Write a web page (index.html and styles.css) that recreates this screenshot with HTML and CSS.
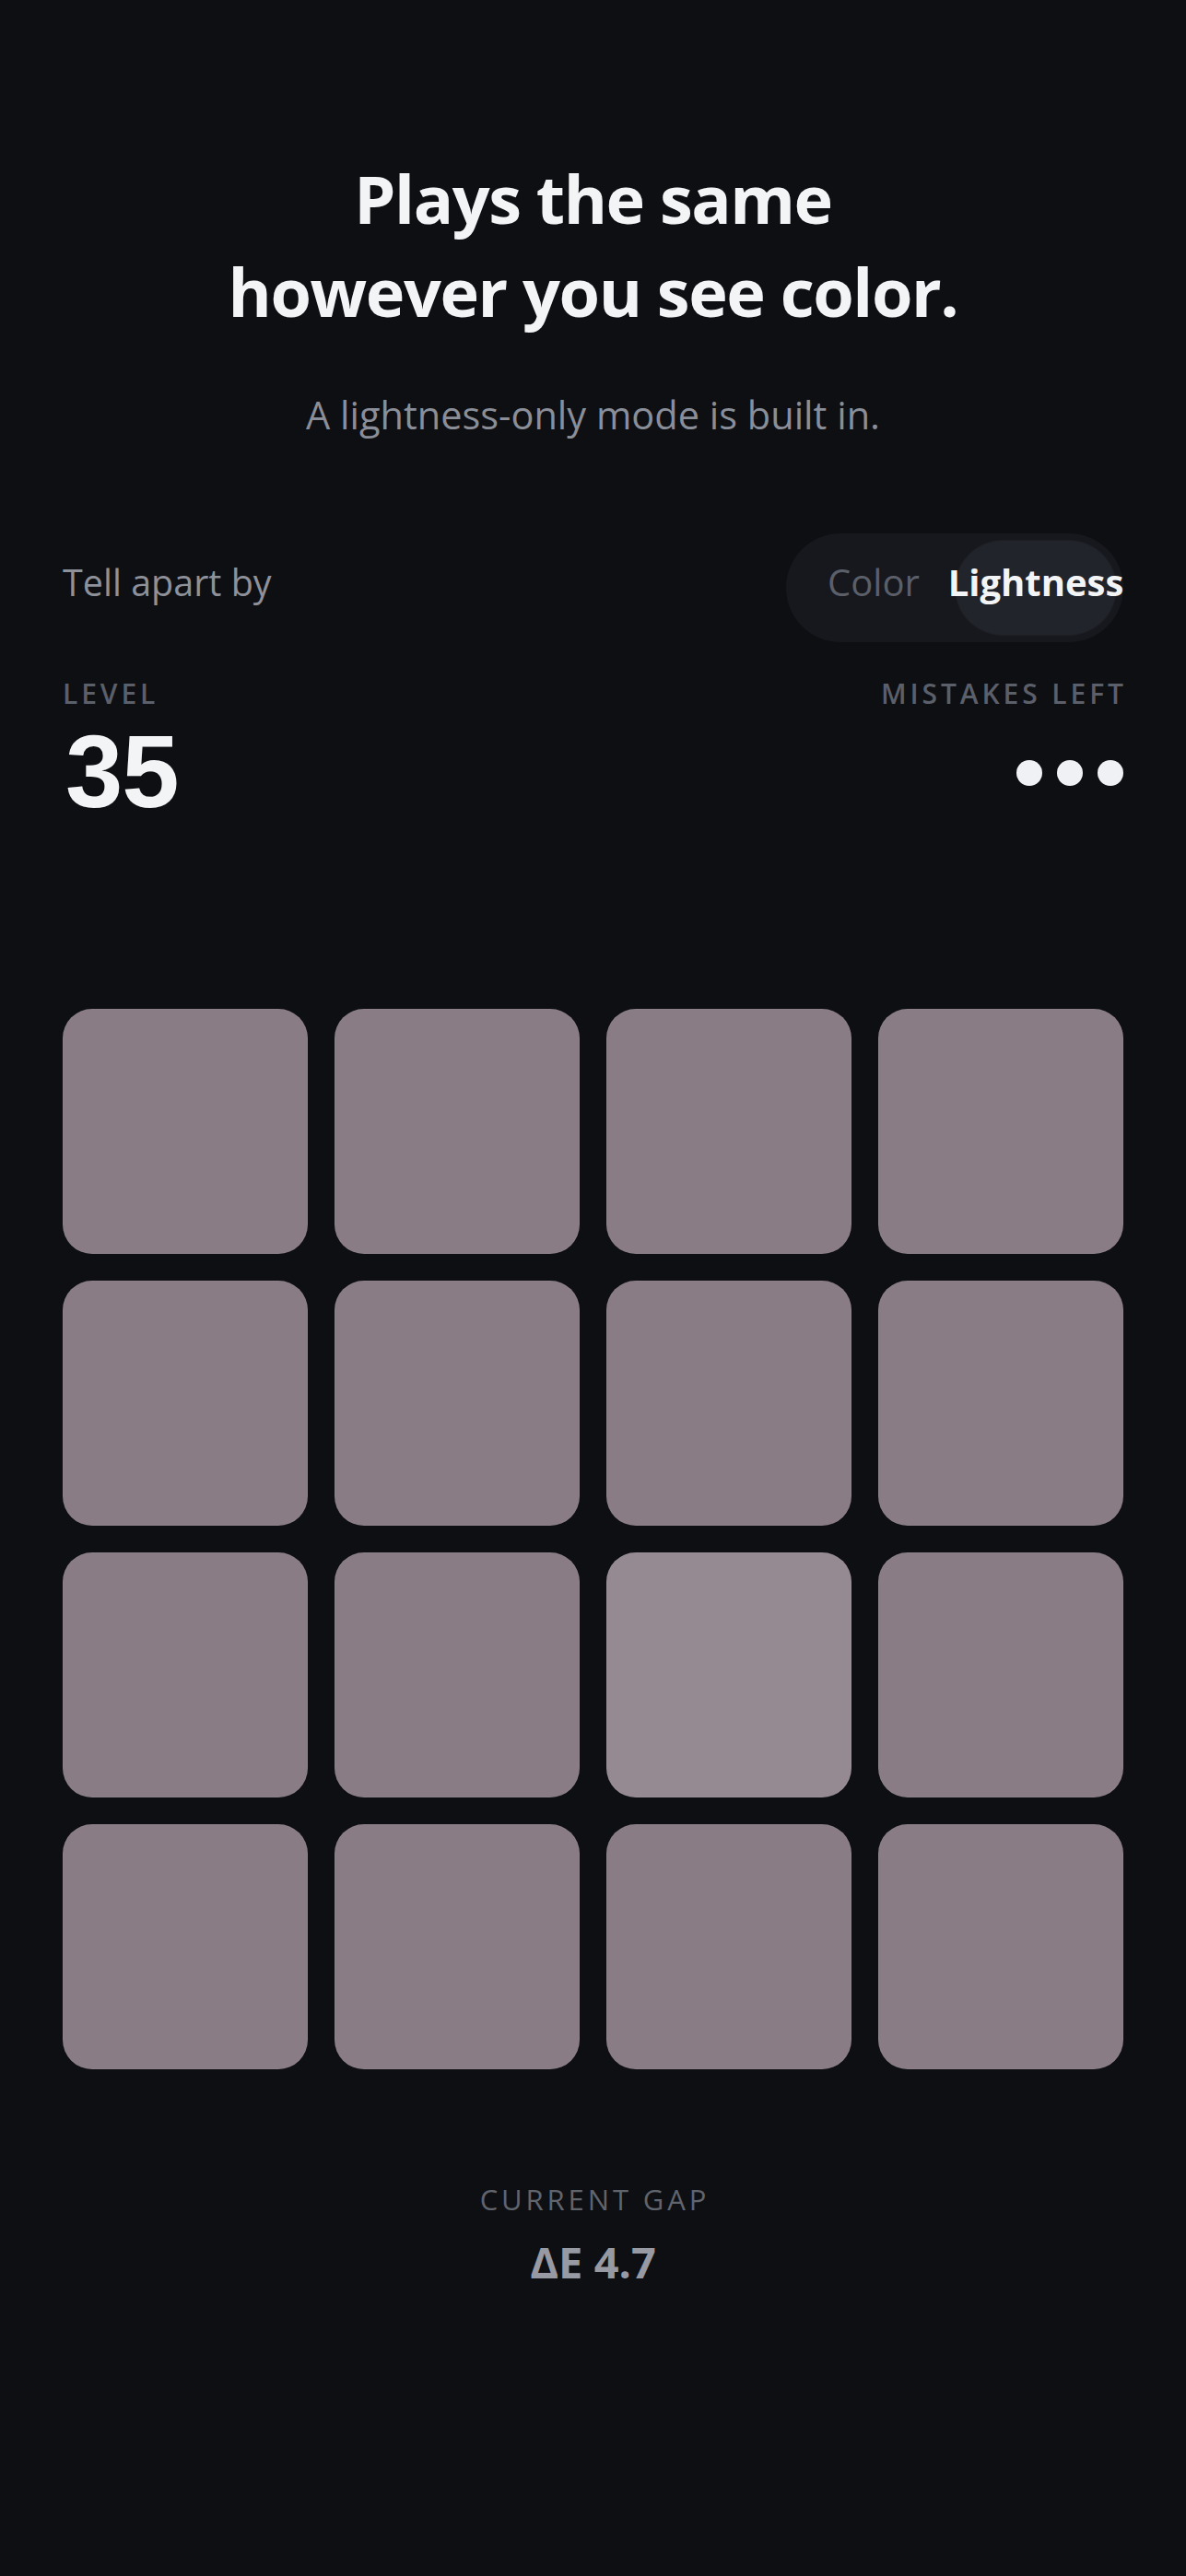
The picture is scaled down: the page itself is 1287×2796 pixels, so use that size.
FILE: index.html
```html
<!DOCTYPE html>
<html lang="en">
<head>
<meta charset="utf-8">
<title>Plays the same however you see color.</title>
<link rel="stylesheet" href="styles.css">
</head>
<body>
<main class="page">
  <header class="hero">
    <h1 class="hero-title">Plays the same<br>however you see color.</h1>
    <p class="hero-sub">A lightness-only mode is built in.</p>
  </header>

  <section class="mode-row">
    <span class="mode-label">Tell apart by</span>
    <div class="toggle" role="tablist">
      <button class="toggle-btn" type="button">Color</button>
      <button class="toggle-btn is-active" type="button">Lightness</button>
    </div>
  </section>

  <section class="stats">
    <div class="stat">
      <span class="stat-label">LEVEL</span>
      <span class="stat-value">35</span>
    </div>
    <div class="stat stat-right">
      <span class="stat-label stat-label-right">MISTAKES LEFT</span>
      <div class="lives">
        <span class="life"></span>
        <span class="life"></span>
        <span class="life"></span>
      </div>
    </div>
  </section>

  <section class="board">
    <div class="tile"></div>
    <div class="tile"></div>
    <div class="tile"></div>
    <div class="tile"></div>
    <div class="tile"></div>
    <div class="tile"></div>
    <div class="tile"></div>
    <div class="tile"></div>
    <div class="tile"></div>
    <div class="tile"></div>
    <div class="tile tile-odd"></div>
    <div class="tile"></div>
    <div class="tile"></div>
    <div class="tile"></div>
    <div class="tile"></div>
    <div class="tile"></div>
  </section>

  <footer class="gap">
    <span class="gap-label">CURRENT GAP</span>
    <span class="gap-value">ΔE 4.7</span>
  </footer>
</main>
</body>
</html>
```

FILE: styles.css
```css
html, body {
  margin: 0;
  padding: 0;
  background: #0e0f13;
}

body {
  min-height: 2796px;
  font-family: "Open Sans", "Noto Sans", "Liberation Sans", sans-serif;
  color: #f3f4f6;
}

.page {
  padding: 0 68px;
  display: flex;
  flex-direction: column;
}

.hero {
  padding-top: 165px;
  text-align: center;
}

.hero-title {
  margin: 0;
  font-size: 72px;
  line-height: 101px;
  font-weight: 700;
  letter-spacing: -0.02em;
  color: #f3f4f6;
}

.hero-sub {
  margin: 56px 0 0;
  font-size: 41.5px;
  line-height: 54px;
  font-weight: 400;
  color: #8a8e98;
}

.mode-row {
  margin-top: 102px;
  display: flex;
  align-items: center;
  justify-content: space-between;
}

.mode-label {
  font-size: 39.5px;
  line-height: 54px;
  padding-bottom: 12px;
  color: #8e9199;
}

.toggle {
  display: flex;
  gap: 2px;
  padding: 8px;
  height: 102px;
  border-radius: 60px;
  background: #17181d;
}

.toggle-btn {
  width: 174px;
  border: 0;
  padding: 0 0 12px;
  border-radius: 52px;
  background: transparent;
  font-family: inherit;
  font-size: 40px;
  line-height: 54px;
  font-weight: 400;
  color: #5b5f69;
  white-space: nowrap;
  display: flex;
  align-items: center;
  justify-content: center;
  overflow: visible;
}

.toggle-btn.is-active {
  background: #22242b;
  box-shadow: 0 0 0 1px rgba(255, 255, 255, 0.03);
  font-weight: 700;
  color: #f3f4f6;
}

.stats {
  margin-top: 41px;
  display: flex;
  justify-content: space-between;
  align-items: flex-start;
}

.stat {
  display: flex;
  flex-direction: column;
}

.stat-right {
  align-items: flex-end;
}

.stat-label {
  font-size: 30px;
  line-height: 30px;
  font-weight: 600;
  letter-spacing: 0.13em;
  color: #5b5f69;
}

.stat-label-right {
  margin-right: -0.13em;
}

.stat-value {
  margin-top: 20px;
  padding-left: 3px;
  font-family: "Liberation Sans", "Open Sans", sans-serif;
  font-size: 112px;
  line-height: 100px;
  font-weight: 700;
  letter-spacing: -0.01em;
  color: #f3f4f6;
}

.lives {
  margin-top: 57px;
  display: flex;
  gap: 16px;
}

.life {
  width: 28px;
  height: 28px;
  border-radius: 50%;
  background: #f0f1f4;
}

.board {
  margin-top: 207px;
  display: grid;
  grid-template-columns: repeat(4, 1fr);
  gap: 29px;
}

.tile {
  aspect-ratio: 1 / 1;
  border-radius: 32px;
  background: #897c85;
  box-shadow: inset 0 0 0 1px rgba(255, 255, 255, 0.04);
}

.tile-odd {
  background: #968a92;
}

.gap {
  margin-top: 126px;
  display: flex;
  flex-direction: column;
  align-items: center;
}

.gap-label {
  font-size: 31px;
  line-height: 31px;
  font-weight: 400;
  letter-spacing: 0.125em;
  padding-left: 0.125em;
  color: #60646d;
}

.gap-value {
  margin-top: 29px;
  font-size: 47px;
  line-height: 47px;
  font-weight: 700;
  color: #979aa2;
}
```
